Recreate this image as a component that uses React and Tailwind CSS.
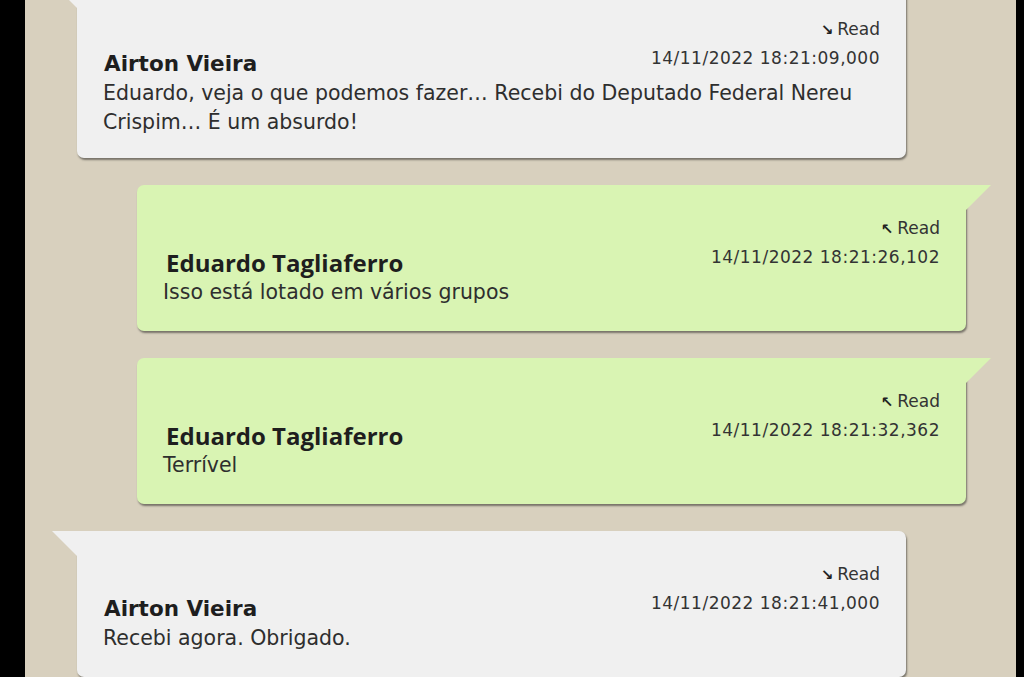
const messages = [
  {
    id: 1,
    side: 'in',
    name: 'Airton Vieira',
    time: '14/11/2022 18:21:09,000',
    text: 'Eduardo, veja o que podemos fazer… Recebi do Deputado Federal Nereu Crispim… É um absurdo!',
  },
  {
    id: 2,
    side: 'out',
    name: 'Eduardo Tagliaferro',
    time: '14/11/2022 18:21:26,102',
    text: 'Isso está lotado em vários grupos',
  },
  {
    id: 3,
    side: 'out',
    name: 'Eduardo Tagliaferro',
    time: '14/11/2022 18:21:32,362',
    text: 'Terrível',
  },
  {
    id: 4,
    side: 'in',
    name: 'Airton Vieira',
    time: '14/11/2022 18:21:41,000',
    text: 'Recebi agora. Obrigado.',
  },
];

function Bubble({ msg }) {
  const incoming = msg.side === 'in';

  return (
    <div
      className={`relative w-[829px] pt-[29px] pb-[24px] first:pt-[32px] first:pb-[21px] pl-[26px] pr-[26px] shadow-[1px_2px_2px_rgba(0,0,0,0.45)] ${
        incoming
          ? 'self-start bg-[#f0f0f0] rounded-tr-[7px] rounded-b-[7px]'
          : 'self-end bg-[#d9f4b3] rounded-tl-[7px] rounded-b-[7px]'
      }`}
    >
      {incoming ? (
        <svg className="absolute left-[-25px] top-0" width="26" height="26" viewBox="0 0 26 26">
          <polygon points="0,0 26,0 26,26" fill="#f0f0f0" />
        </svg>
      ) : (
        <svg className="absolute right-[-25px] top-0" width="26" height="26" viewBox="0 0 26 26">
          <polygon points="0,0 26,0 0,26" fill="#d9f4b3" />
        </svg>
      )}

      <div className="text-right text-[17px] leading-[28px] text-[#333]">
        <span className="text-[15px] font-bold mr-[4px] text-[#222]">{incoming ? '↘' : '↖'}</span>
        Read
      </div>
      <div className="flex items-start justify-between h-[34px]">
        <div
          className={`mt-[6px] leading-[28px] text-[#1e1e1e] font-bold ${
            incoming ? 'text-[21.5px] pl-[1px]' : "text-[24px] pl-[3px] font-['Open_Sans',sans-serif]"
          }`}
        >
          {msg.name}
        </div>
        <div className="text-[17px] leading-[28px] tracking-[0.5px] text-[#333]">{msg.time}</div>
      </div>
      <p className="mt-[1px] text-[20.5px] leading-[29px] text-[#2e2e2e] pr-[12px]">{msg.text}</p>
    </div>
  );
}

export default function App() {
  return (
    <div className="h-[677px] w-[1024px] overflow-hidden bg-black flex font-['DejaVu_Sans',sans-serif]">
      <div className="ml-[25px] mr-[8px] flex-1 bg-[#d8d0be] overflow-hidden">
        <div className="mt-[-17px] pl-[52px] pr-[50px] flex flex-col gap-[27px]">
          {messages.map((m) => (
            <Bubble key={m.id} msg={m} />
          ))}
        </div>
      </div>
    </div>
  );
}
